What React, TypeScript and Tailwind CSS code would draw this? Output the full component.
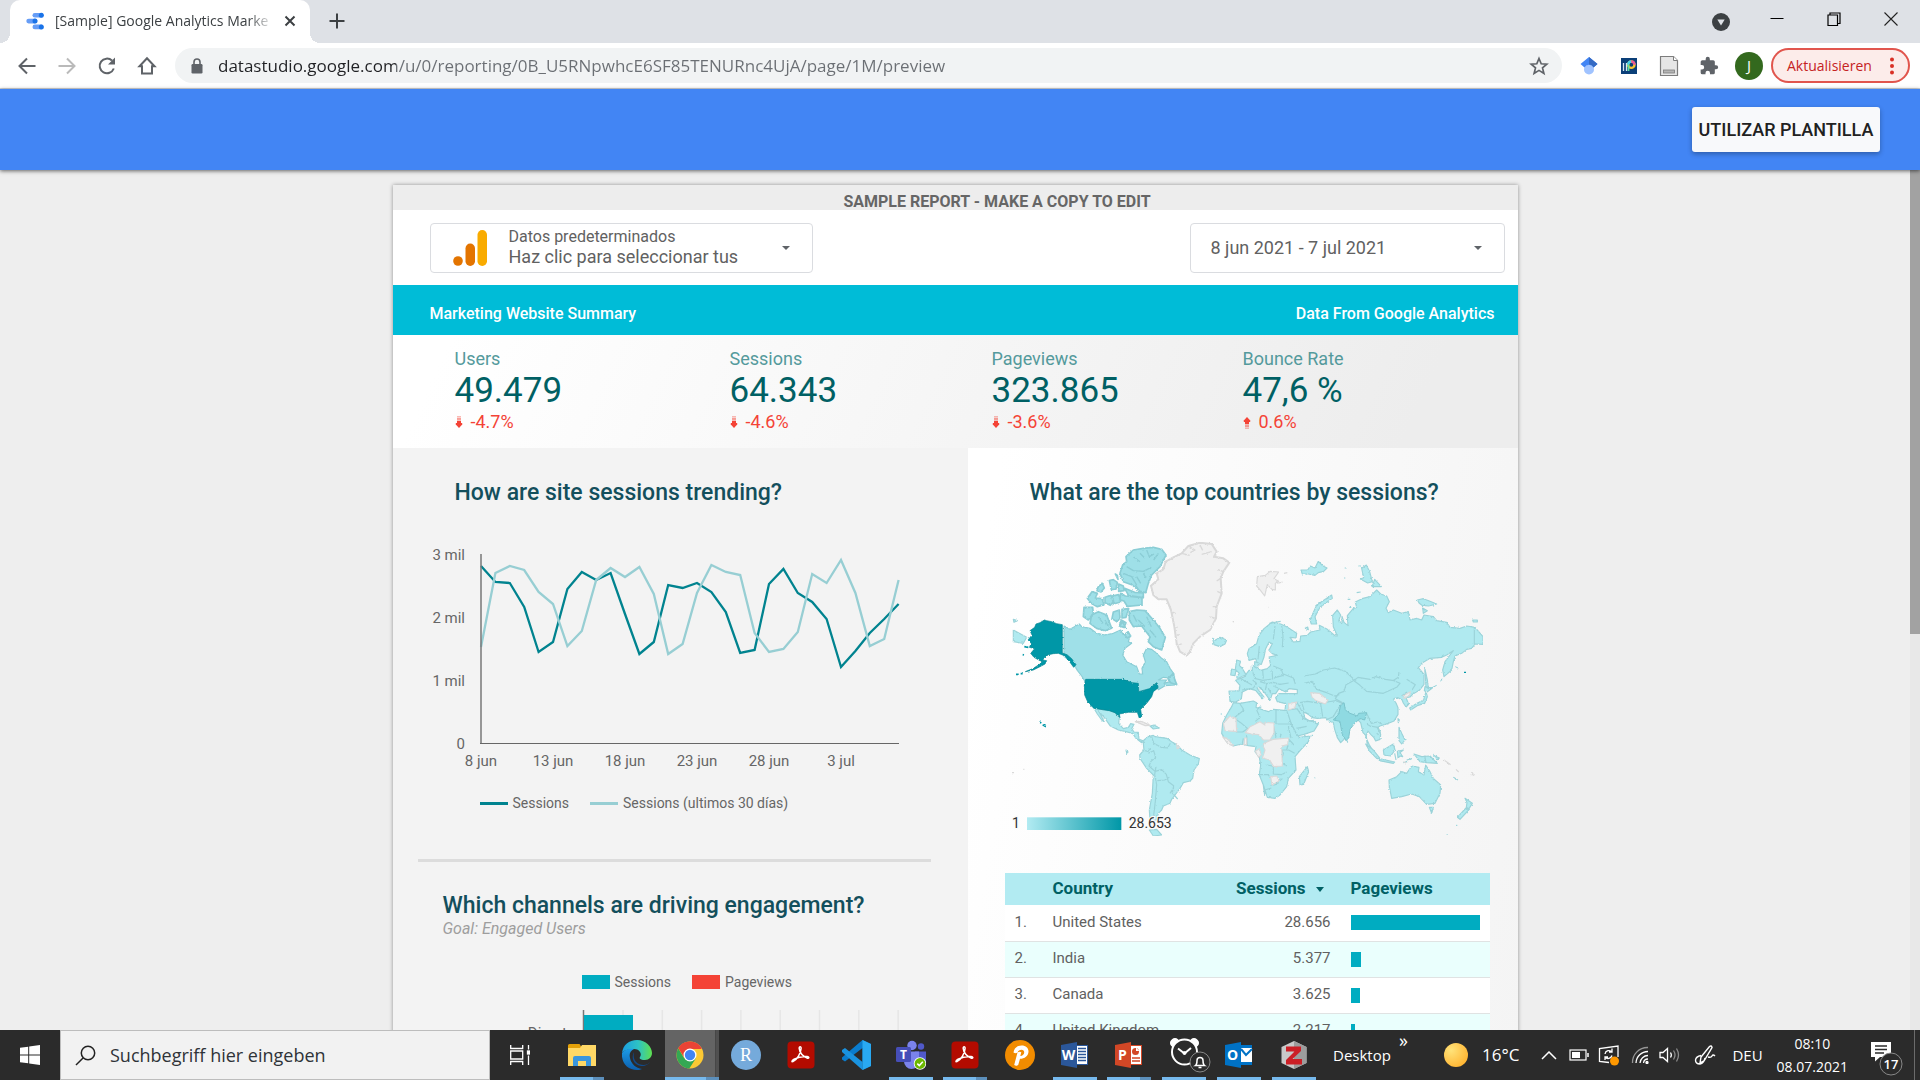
import React from "react";

/* ---------------------------------------------------------------- data */

const kpis = [
  { label: "Users", value: "49.479", delta: "-4.7%", up: false },
  { label: "Sessions", value: "64.343", delta: "-4.6%", up: false },
  { label: "Pageviews", value: "323.865", delta: "-3.6%", up: false },
  { label: "Bounce Rate", value: "47,6 %", delta: "0.6%", up: true },
];

const current = [12, 28, 29, 53, 98, 88, 35, 18, 26, 19, 60, 100, 88, 31, 34, 29, 38, 58, 99, 96, 30, 15, 39, 48, 65, 113, 97, 79, 65, 50];
const previous = [93, 19, 12, 16, 38, 50, 92, 77, 26, 14, 23, 13, 40, 100, 90, 39, 11, 18, 21, 79, 98, 95, 78, 20, 29, 6, 39, 92, 85, 26];
const toPoints = (ys: number[]) => ys.map((y, i) => `${88 + i * 14.4},${y + 10}`).join(" ");

const countries = [
  { name: "United States", sessions: "28.656", bar: 129 },
  { name: "India", sessions: "5.377", bar: 10 },
  { name: "Canada", sessions: "3.625", bar: 9 },
  { name: "United Kingdom", sessions: "2.217", bar: 4 },
];

/* ------------------------------------------------------------- browser */

function StudioLogo() {
  return (
    <svg viewBox="0 0 18 18" className="h-[18px] w-[18px] shrink-0">
      <rect x="6.500" y="1" width="11" height="4.600" rx="2.300" fill="#669df6" />
      <rect x="0.300" y="6.800" width="11" height="4.600" rx="2.300" fill="#669df6" />
      <rect x="6.500" y="12.600" width="11" height="4.600" rx="2.300" fill="#669df6" />
      <circle cx="15.300" cy="3.300" r="2.500" fill="#1a73e8" />
      <circle cx="9" cy="9.100" r="2.500" fill="#1a73e8" />
      <circle cx="15.300" cy="14.900" r="2.500" fill="#1a73e8" />
    </svg>
  );
}

function TabStrip() {
  return (
    <div className="flex h-[43px] items-center bg-[#dee1e6]">
      <div className="flex h-full items-end">
        <span className="h-[10px] w-[10px] bg-[radial-gradient(circle_at_0_0,#dee1e6_10px,#fff_10px)]" />
      </div>
      <div className="flex h-full w-[300px] items-center rounded-t-[10px] bg-white pb-[2px] pl-4 pr-3">
        <StudioLogo />
        <span className="ml-[11px] w-[219px] overflow-hidden whitespace-nowrap text-[14px] text-[#3c4043] [mask-image:linear-gradient(90deg,#000_88%,transparent)]">
          [Sample] Google Analytics Marke
        </span>
        <button aria-label="Close tab" className="ml-[10px]">
          <svg viewBox="0 0 12 12" className="h-3 w-3" stroke="#3c4043" strokeWidth="2">
            <path d="M1.500 1.500l9 9M10.500 1.500l-9 9" />
          </svg>
        </button>
      </div>
      <div className="flex h-full items-end">
        <span className="h-[10px] w-[10px] bg-[radial-gradient(circle_at_100%_0,#dee1e6_10px,#fff_10px)]" />
      </div>
      <button aria-label="New tab" className="ml-[9px] pb-[2px]">
        <svg viewBox="0 0 16 16" className="h-4 w-4" stroke="#3c4043" strokeWidth="2">
          <path d="M8 .5v15M.5 8h15" />
        </svg>
      </button>
      <div className="ml-auto flex h-full items-center pr-[22px]">
        <button aria-label="Search tabs" className="mr-[40px]">
          <svg viewBox="0 0 18 18" className="h-[18px] w-[18px]">
            <circle cx="9" cy="9" r="9" fill="#3c4043" />
            <path d="M5.300 6.500h7.400L9 12.500z" fill="#dee1e6" />
          </svg>
        </button>
        <div className="flex items-center gap-[43px] pb-[6px]">
          <button aria-label="Minimize">
            <svg viewBox="0 0 14 14" className="h-[14px] w-[14px]" stroke="#000" strokeWidth="1"><path d="M0.500 6.500h13" /></svg>
          </button>
          <button aria-label="Restore">
            <svg viewBox="0 0 14 14" className="h-[14px] w-[14px]" stroke="#000" strokeWidth="1.200" fill="none">
              <path d="M1 3h9.500v10.500H1zM3 3V1h10v10.500h-2.500" />
            </svg>
          </button>
          <button aria-label="Close">
            <svg viewBox="0 0 14 14" className="h-[14px] w-[14px]" stroke="#222" strokeWidth="1.100"><path d="M.5.5l13 13M13.500.5l-13 13" /></svg>
          </button>
        </div>
      </div>
    </div>
  );
}

function Toolbar() {
  return (
    <div className="flex h-[46px] items-center border-b border-[#d5d7da] bg-white pl-[17px] pr-[10px]">
      <div className="flex items-center gap-5 text-[#5f6368]">
        <button aria-label="Back">
          <svg viewBox="0 0 20 20" className="h-5 w-5" fill="none" stroke="currentColor" strokeWidth="2"><path d="M18.500 10H3M10 2.500L2.500 10l7.500 7.500" /></svg>
        </button>
        <button aria-label="Forward" className="text-[#bababa]">
          <svg viewBox="0 0 20 20" className="h-5 w-5" fill="none" stroke="currentColor" strokeWidth="2"><path d="M1.500 10H17M10 2.500l7.500 7.500-7.500 7.500" /></svg>
        </button>
        <button aria-label="Reload">
          <svg viewBox="0 0 20 20" className="h-5 w-5">
            <path d="M16.800 12.500A7.300 7.300 0 1 1 15 4.600" fill="none" stroke="currentColor" strokeWidth="2" />
            <path d="M18 1.500v7h-7z" fill="currentColor" />
          </svg>
        </button>
        <button aria-label="Home">
          <svg viewBox="0 0 20 20" className="h-5 w-5" fill="none" stroke="currentColor" strokeWidth="2"><path d="M10 2.300L2.500 10.200H5V17.500h10v-7.300h2.500z" /></svg>
        </button>
      </div>
      <div className="ml-[18px] flex h-[35px] flex-1 items-center rounded-full bg-[#f1f3f4] pl-4 pr-[13px]">
        <svg viewBox="0 0 12 16" className="h-4 w-3 shrink-0">
          <rect x="0.500" y="6" width="11" height="9.500" rx="1.200" fill="#5f6368" />
          <path d="M3 6.500V4a3 3 0 0 1 6 0v2.500" fill="none" stroke="#5f6368" strokeWidth="1.600" />
        </svg>
        <input
          aria-label="Address"
          defaultValue="datastudio.google.com/u/0/reporting/0B_U5RNpwhcE6SF85TENURnc4UjA/page/1M/preview"
          className="ml-[15px] min-w-0 flex-1 bg-[linear-gradient(90deg,#202124_178px,#6b6f74_178px)] bg-clip-text text-[17px] text-transparent outline-none"
        />
        <button aria-label="Bookmark">
          <svg viewBox="0 0 20 20" className="h-5 w-5" fill="none" stroke="#5f6368" strokeWidth="1.700">
            <path d="M10 2.500l2.200 5.300 5.600.4-4.300 3.700 1.400 5.500-4.900-3-4.900 3 1.400-5.500L2.200 8.200l5.600-.4z" />
          </svg>
        </button>
      </div>
      <div className="flex items-center gap-5 pl-[17px]">
        <svg viewBox="0 0 20 20" className="h-5 w-5">
          <circle cx="10" cy="13.500" r="5" fill="#a0c3ff" />
          <path d="M10 1L1.500 8l4 3.500a5 5 0 0 1 9 0l4-3.500z" fill="#4285f4" />
          <path d="M10 1l8.500 7-4 3.500A5 5 0 0 0 10 8.500z" fill="#356ac3" />
        </svg>
        <svg viewBox="0 0 20 20" className="h-5 w-5">
          <rect x="2" y="2" width="16" height="16" fill="#0b3f78" />
          <path d="M4.500 7v8M7.500 7v8" stroke="#d6e6f5" strokeWidth="1.300" />
          <circle cx="12.300" cy="8.700" r="3.200" fill="none" stroke="#f7c531" strokeWidth="2.400" />
          <path d="M9.100 8.700a3.200 3.200 0 0 1 3.200-3.200" fill="none" stroke="#3fd0f0" strokeWidth="2.400" />
          <path d="M12.300 5.500a3.200 3.200 0 0 1 3.200 3.200" fill="none" stroke="#e9559b" strokeWidth="2.400" />
          <path d="M9.500 9v6" stroke="#5be0a0" strokeWidth="1.800" />
        </svg>
        <svg viewBox="0 0 20 22" className="h-[22px] w-5">
          <path d="M1.500 1.500h13l4 4v15h-17z" fill="#e6e6e6" stroke="#7c7c7c" strokeWidth="1.200" />
          <path d="M14.500 1.500v4h4" fill="#fff" stroke="#7c7c7c" />
          <rect x="4.500" y="15" width="11" height="3" fill="#b5b5b5" stroke="#7c7c7c" strokeWidth="0.800" />
        </svg>
        <svg viewBox="0 0 24 24" className="h-5 w-5" fill="#5f6368">
          <path d="M20.500 11H19V7a2 2 0 0 0-2-2h-4V3.500a2.500 2.500 0 0 0-5 0V5H4a2 2 0 0 0-2 2v3.800h1.500a2.700 2.700 0 0 1 0 5.400H2V20a2 2 0 0 0 2 2h3.800v-1.500a2.700 2.700 0 0 1 5.400 0V22H17a2 2 0 0 0 2-2v-4h1.500a2.500 2.500 0 0 0 0-5z" />
        </svg>
      </div>
      <button className="ml-[16px] flex h-7 w-7 items-center justify-center rounded-full bg-[#33691e] text-[15px] text-white">J</button>
      <button className="ml-2 flex h-[35px] w-[139px] items-center justify-between rounded-full border-2 border-[#d93025]/80 bg-[#fcecea] pl-[14px] pr-[14px] text-[14px] text-[#c5221f]">
        Aktualisieren
        <svg viewBox="0 0 4 18" className="h-[18px] w-1" fill="#d93025">
          <circle cx="2" cy="2.500" r="2" /><circle cx="2" cy="9" r="2" /><circle cx="2" cy="15.500" r="2" />
        </svg>
      </button>
    </div>
  );
}

/* -------------------------------------------------------------- report */

const Caret = () => (
  <svg viewBox="0 0 8 4" className="h-1 w-2" fill="#5f6368"><path d="M0 0h8L4 4z" /></svg>
);

function DeltaArrow({ up }: { up: boolean }) {
  return (
    <svg viewBox="0 0 8 12" className={up ? "mt-px h-3 w-2" : "h-3 w-2 rotate-180"} fill="#f44336">
      <path d="M4 0L.8 3.500v1.500h6.400V3.500z" />
      <path d="M2 4h4v3H2z" />
      <path d="M2 7.600h4v1H2z" opacity=".8" />
      <path d="M2 9.200h4v1H2z" opacity=".65" />
      <path d="M2 10.800h4v1H2z" opacity=".45" />
    </svg>
  );
}

function TrendChart() {
  return (
    <svg viewBox="0 0 575 230" className="block w-full" fontFamily="Roboto, sans-serif" fontSize="15" fill="#666">
      {["3 mil", "2 mil", "1 mil", "0"].map((t, i) => (
        <text key={t} x="72" y={16 + i * 63} textAnchor="end">{t}</text>
      ))}
      {["8 jun", "13 jun", "18 jun", "23 jun", "28 jun", "3 jul"].map((t, i) => (
        <text key={t} x={88 + i * 72} y="222" textAnchor="middle">{t}</text>
      ))}
      <polyline points={toPoints(current)} fill="none" stroke="#00838f" strokeWidth="2.300" />
      <polyline points={toPoints(previous)} fill="none" stroke="#97ced3" strokeWidth="2.300" />
      <path d="M88 10v190" stroke="#777" strokeWidth="1.500" />
      <path d="M87 199.500h419" stroke="#666" strokeWidth="1.200" />
    </svg>
  );
}

function ChannelChart() {
  return (
    <svg viewBox="0 0 575 60" className="block w-full" fontFamily="Roboto, sans-serif" fontSize="15" fill="#666">
      {[0, 1, 2, 3, 4, 5, 6, 7].map((i) => (
        <path key={i} d={`M${230 + i * 39.3} 0v60`} stroke="#e6e6e6" strokeWidth="1.500" />
      ))}
      <path d="M190.500 0v60" stroke="#777" strokeWidth="1.500" />
      <rect x="191" y="5" width="49" height="37" fill="#00acc1" />
      <text x="174" y="28" textAnchor="end">Direct</text>
    </svg>
  );
}

const seaIslands =
  "M325 200l12-10 6 14-10 12-12-4zM292 235l14-20 16 5-6 14 20 2 6 18-20 6-18-10zM358 182l12-3 12 8-4 20-14 2zM386 192l14 6 2 14-16 2zM345 232l18-6 8 18-10 12-16-8zM366 228l20-4 6 22-22 6zM392 220l14 8 50 5 0 22-44 4-10-16-12-4zM370 276l18-6 2 22-8 14-16-10zM396 268l20-2-8 26-12 2zM376 162l6 4 2 12zM404 205l30 12 26 2v14l-44-6zM394 300l14 8-6 14-14-4zM404 344l10-8 8 12-10 6zM388 318l10-12 8 16z";

function WorldMap() {
  return (
    <svg viewBox="60 60 1431 900" className="block h-[300px] w-[477px]" strokeLinejoin="round" role="img" aria-label="Sessions by country">
      <defs>
        <filter id="coast" x="0" y="0" width="100%" height="100%">
          <feTurbulence type="fractalNoise" baseFrequency="0.18" numOctaves="2" seed="4" />
          <feDisplacementMap in="SourceGraphic" scale="7" xChannelSelector="R" yChannelSelector="G" />
        </filter>
        <linearGradient id="scale" x1="0" x2="1" y1="0" y2="0">
          <stop offset="0" stopColor="#b2ebf2" />
          <stop offset="1" stopColor="#0097a7" />
        </linearGradient>
      </defs>
      <g filter="url(#coast)">
        {/* Greenland */}
        <path
          d="M483 197l22-19-5-18 20-12 7-23 23-13 25-12 20-22 35-10 35 4 15 23-8 15 28 5 18 13-18 27-8 20 3 45-15 40-2 35-18 35-30 20-20 20-10 25-10 12-20-12-10-25-7-50-10-50-13-32-25 0-15-13z"
          fill="#f1f1f1" stroke="#d9d9d9" strokeWidth="6"
        />
        <path d="M595 78l20 12-14 8M575 100l24 6M630 75l8 16M665 95l-30 8M700 155l-16-6M692 175l-12 8M694 220l-12-6M680 260l-12 0M677 295l-16-4M545 275l12 6M553 320l10 2M560 345l10 0M566 375l10-4" fill="none" stroke="#d9d9d9" strokeWidth="4" />
        <g fill="#9fe0e8" stroke="#8bcdd5" strokeWidth="5">
          {/* Canada */}
          <path d="M222 318l18 10 28-16 7 8 25 5 20 15 25 5 25-5 22-10 8 15 15-10 5 15-5 15 10 5-20 15-7 20 12 20 30 15 8 22 10 0-2-17 10-20-6-20 10-20 15 3 15 12 15 15 15 10 10 20 12 17-12 12-20-2-15 8 25 0-8 10 18-5 20 5-5 5-30 2-20 12-5-13-10 5-15 10-25 12-10-12-5-15-15-5-25-7H285l-10-16-13-17-12-20-28-22z" strokeWidth="3.500" />
          <path d="M418 275l22-5 25 2 25 28 20 25 16 27-11 38-25-10-15-15 5-15-25-32-25 2-12-20zM305 285l20-10 25 10 15 40-20 7-25-7-20-15zM282 262l26 0 2 18-15 20-15-10z" />
          <path d="M460 85l30-3 25 6 13 17-18 35-25 25-10 25-8 28-20-5-20-18-27-10-10-25 8-25 12-10-2-15 22-20z" />
          <path d={seaIslands} />
          <path d="M410 140l20 12 30 2 24-12M400 160l25 10 15 25M430 110l20 15M470 90l8 20 14-8M440 170l12 20M450 215l-14-20M445 300l20 20M470 290l14 30M480 330l18 22M450 100l14 14M505 100l-14 20M460 160l8 14M430 285l10 20M325 290l14 20M345 300l10 20" fill="none" strokeWidth="4" />
          <path d="M534 476l16-16 4 18 6 16-18-6z" />
        </g>
        <g fill="#b0eaf0" stroke="#9bd3d9" strokeWidth="3.500">
          {/* Mexico, Central and South America, Iceland, Chukotka */}
          <path d="M312 565l46 7 17 6 13 16-2 16 14 16 15-4 7-11 10 2-7 13 7 10 13 1 2 21 15 5-7 5-17-13-10-15-23-6-20-4-25-13-15-22-20-23 10 18 8 16-8-6-13-18z" />
          <path d="M462 660l13-10 15-4 5 4 35 5 15 10 17 10 13 15 25 15 28 11-3 16-13 18-4 25-8 8-20 5-10 17-15 20-10 13-5 12-20 8-5 12-10 10-5 20h-20l-2-30 9-50 3-55-20-20-20-30-1-10 13-15-2-20zM478 930l22-2 15 17-25 3z" />
          <path d="M668 355l8 6 14-9 20 8-5 12-15 8-18-6zM70 330l40 22-10 18-30-5zM70 298l12 4-10 5zM408 690l6 6-4 4zM480 618l12-3 16 9-18 3z" />
          <path d="M485 650l6 20 22 12 20 2 8-14M475 700l16-8 6 20-14 12-6 14 18 16 20-5 14 14 6 22 16 12-4 22 16 18M498 740l-4 24 6 30-4 50-6 50M502 782l22-2 14-8M540 820l12-18M456 690l18 4 8-10" fill="none" />
        </g>
        {/* United States */}
        <path d="M163 300l-13 8-12 4-4 10-14 10 6 13-12 15 10 10-6 12 16 4-12 14 10 12 18 10 8 2-8 8-20 13-24 10 24-5 20-10 15-8 5-10-12-2 7-8 10-8 15-3 15-1 20 8 16 20 10 14 7-8-13-18-14-12-14-5v-85l-17-3-15-6-15-3zM287 478h110l30 10 18 2 1 25 32-9 22-18 5 15-15 12-5 15-15 20-18 18 3 22-7 5-6-18h-27l-27 5 2 11-15-15-17-6-46-7-17-15-11-25-1-30z" fill="#0097a7" stroke="#00838f" strokeWidth="2" />
        <path d="M78 463h8M92 461h6M103 380l12 2M148 606l6 3M158 614l10 6M98 404l4 1" stroke="#0097a7" strokeWidth="5" />
        <path d="M436 605l18-1 26 12-14 1zM560 672l8 10-6 6zM66 758h6M100 748h3M730 305h2" fill="#eee" stroke="#d9d9d9" strokeWidth="4" />
      </g>
      <g transform="translate(690 0)">
        <g filter="url(#coast)">
          <g fill="#b0eaf0" stroke="#9bd3d9" strokeWidth="3.500">
            {/* Eurasia */}
            <path d="M182 312l18 8 30 20-2 14-18-2 10 14 20-2 2-16 20-2 10-10 28-6-2-14 24 12 24 20 6 0-12-28-2-34 14-16 10 15-6 18 10 6 0-20 6 18 12 10-2-30 18-22 10-3-4-16 20-10 24-6 20-20 12 12 18 6 8 17-10 20 7 13 15-8 25 10 20-5 5 25 20-5 15 5 7-15 28 5 10 12 30 5 10 15 30 3 20-7 25 4 24 28v23l-24-1-10 13-15 3-15 12-20 8-5 17-5 25-23 20-4-20 7-25 15-20 10-13-20 13-15 7-35 3-25 15-10 13 17 20 0 30-14 18-18 10-10 10-12 2 8 20-8 8-8-12-4-10-12-6-14 4 8 12 6 14 0 20-12 20-20 8-22 7-8 5 10 20-2 15-13 5-5-10-10-10-8-10-7 18 10 22 15 25-5 0-15-20-3-30-10-10-7-30-10-10-12 10-8 10-15 20-5 20-10 10-10-15-8-25-4-20-13-5-10-10-25 2-15-2-15-12-12-6 4 18 13 10 15-2 12 12-12 20-30 10-20 5-10-20-20-40-7-15 2-22-25-6-5-12 10-12h55l0-12-25-3-10 10-20-10-10 15-10 0-7 20-8-12-10-13-15-15-5 5 20 25-5 5-20-25-20-5-20 10-3 20-17 10-17-2-3-31 30 0 3-17-13-15 25-10 15-20 10 0 0-15 13 5 12 10 20-5 10-10-5-25 25-5-15-5-10-10 10-20-10-5-10 20-5 25-8 22-12-2-5-15-20 5-5-20 5-15 23-15 7-25 15-20 25-20z" />
            {/* Africa */}
            <path d="M40 548l20 2 40-7 10 5-2 14 22 8 15 5 15-7 40 4 5 13 10 30 13 25 10 12 32-4-5 17-25 27-15 18 3 40-23 25-5 25-20 25-15 10-23-3-12-37-12-30 4-30-4-23-13-17 3-15-23-3-20-5-25 6-20-13-15-25 3-30 12-25 15-25z" />
            <path d="M262 740l4 15-15 38-11 2-2-25 12-15zM507 780l23-10 15-15 15 5 15-22 22 4-2 13 17 10 5-30 13 20 10 20 22 20-2 25-15 30-25 3-22-23-23-8-30 8-30 5-7-35zM628 862h12l-5 18zM735 835l22 15-10 16-8-4 2-14zM738 864l8 6-26 28-8-6z" />
            <path d="M437 672l23 18 20 25-10 0-20-20zM478 716l46 10-4 4-42-8zM490 690l30-18 5 18-13 18-20-3zM532 694l18-4-10 8 8 12-8-2-6 6zM582 702l23 8 25-2 22 22-32-2-20-3zM537 622l8 18 10 20-10 12-8-10zM534 596l4 4-3 8zM618 515l4 15-8 20-20 6-22 14-3-6 22-14 20-10zM615 500l22 4-16 12-8-4zM614 444l8 36 4 26-8-6z" />
            <path d="M50 420l12 4-4 12 8 8 12 20-26 12-2-6 8-10-12-12zM32 465l3-18 13 3-3 17zM270 300l20-45 45-30 2 10-37 27-15 28 5 22-16 0zM243 150l20 0 8-12 14 6 10-20 14 14 12 6-10 10-16 4-10 8-20-4-18 0zM425 145l14-10 10 20 8 30-14 4-22-12 10-4zM456 200l8-22 20 22zM592 240l18-4 20 8 20 8-24 6-20-2-8-6zM608 264l14 8-12 8zM758 300l14 0 0 6-12 0zM255 325l8-4 2 8zM104 425l12 4-4 16-8-4zM410 218l12-2M372 174h4M374 144h6M415 138h8M383 238h8M388 262h6M470 640l6 4M524 700l4 20M560 720l16-4M640 706l18 8-8 6M700 772l14 8M550 728l14-4M282 774h4M380 660l4 8M275 646h4" />
            <path d="M118 378l-4 40M165 318l-5 40M185 318l4 30-2 34M98 455l6 20 24 6 30-4-2-28M128 450l2 26M160 438l24 10 6 18-28 8M66 510l34-6 10-14-12-10M120 485l20 6 20-4 20 6 26-4M140 492l-4 18M160 498l14 6M190 462l30 12 6 18M145 505l8 16M60 475l36 20" fill="none" />
            <path d="M252 468l34-6 24-12 34-6 32 10 28 26 10-8 36 6 16-8 30 8 26 4 18 8-10 12-40 18-50-6-20-18-16-12M404 480l-26 14-6 20-16 6-10 16 18 10 10 8M252 490l24-6 14 24 30 10 24 10 14-4M240 548l22-4 40 6 20-4 26-4 18 8-12 16-14 24-18 8M246 550l6 20M302 552l6 38M230 545l14 26 22 12M205 570l26-4 20 30 46 16M230 625l30-6M537 456l-2 16-16 10M560 478l26 16-10 16M545 528l16-12M440 580l14 30 18-4 14 6M440 612l14 8M450 618l24 4 8 16" fill="none" />
            <path d="M110 570l10 22-14 12M60 552l12 18-30 24 20 14 26 22 26-24M168 570v42M124 560l-12 8M170 612h42M160 612l8 40M205 620l8 34M48 636l20 0 12-8M70 655l-4 20M80 648l2 28M182 690h24l18 10M140 735l24 4 22-6M180 680l10 20-8 26 18 12M118 764h26l8 10M150 795l14 0 24-20M130 796l4 30 0-16 20-6M160 740v22l24 2 16-8M184 640l-4 14M204 655l18 20M200 690l4-16" fill="none" />
            <path d="M148 310l34-6M614 706l4 22M763 322v50" fill="none" />
          </g>
          <g fill="#f0f0f0" stroke="#d9d9d9" strokeWidth="3.500">
            <path d="M10 610l20-22 18 7 2 40-35-3zM90 620l30-15 15 10 0-8 27 2 0 31-12 20-20 0-14-16-22-2-18-4zM132 670l28-12 45-4-2 20-18 4 2 60-26 2-12-20-22-6 8-24-6-12zM152 770l18-2 8 14-22 14zM8 650l16 8 16 20-16-6zM106 694l12-8 6 18-8 8zM74 654h6v20h-8z" />
            <path d="M272 518l26 2 26 20-8 12-28-10-12-10zM549 527l22-12-2 10-14 10zM206 550l24-4-6 18-18 6z" />
            <path d="M112 170l24-4 14-12 26 2-14 20 14 8-10 6 0 20-10-2-14-14-8 34-12-16-12-14zM192 160l10-2M172 190l16-4M145 262h1M38 305h4M672 720l20 14M708 748l8 8M752 764l12 0M757 757l4 10M550 725l8 4" />
          </g>
          <path d="M340 600l16-18 6-26 10-8 4 22 14 10 22 8 4-8 24-2-6 22-14-4-16 14-14 18-4 26-8 8-12-22-6-36z" fill="#8fdae2" stroke="#7cc4cc" strokeWidth="3" />
          <path d="M650 496l-20 10M662 484l4-8M706 440l8 4M708 916h4M680 944h3M2 582h4M664 414l6-10" stroke="#8fd0d8" strokeWidth="3" />
          <path d="M732 457h6" stroke="#0097a7" strokeWidth="4" />
        </g>
      </g>
      <g>
        <rect x="111" y="892" width="283" height="38" fill="url(#scale)" />
        <g fontFamily="Roboto, sans-serif" fontSize="42" fill="#333" stroke="#fafafa" strokeWidth="8" paintOrder="stroke">
          <text x="66" y="925">1</text>
          <text x="416" y="925">28.653</text>
        </g>
      </g>
    </svg>
  );
}

function CountryTable() {
  return (
    <table className="w-full table-fixed border-collapse text-[15px] text-[#616161]">
      <colgroup>
        <col className="w-[48px]" />
        <col />
        <col className="w-[114px]" />
        <col className="w-[159px]" />
      </colgroup>
      <thead>
        <tr className="h-8 bg-[#b2ebf2] text-left text-[17px] text-[#006064]">
          <th aria-label="Rank" />
          <th className="font-bold">Country</th>
          <th className="whitespace-nowrap font-bold">
            <span className="flex items-center justify-end pr-[7px]">
              Sessions
              <svg viewBox="0 0 8 5" className="ml-[10px] h-[5px] w-2" fill="#006064"><path d="M0 0h8L4 5z" /></svg>
            </span>
          </th>
          <th className="pl-[20px] font-bold">Pageviews</th>
        </tr>
      </thead>
      <tbody>
        {countries.map((c, i) => (
          <tr key={c.name} className="h-9 border-b border-[#e0e3e3] bg-white even:bg-[#eafffd]">
            <td className="pb-px pl-[10px]">{i + 1}.</td>
            <td className="pb-px">{c.name}</td>
            <td className="pb-px text-right">{c.sessions}</td>
            <td className="pl-[20px]">
              <div className="h-[15px] bg-[#00acc1]" style={{ width: c.bar }} />
            </td>
          </tr>
        ))}
      </tbody>
    </table>
  );
}

function Report() {
  return (
    <article className="mx-auto w-full max-w-[1125px] bg-white shadow-[0_0_4px_rgba(0,0,0,0.4)]">
      <p className="h-[25px] bg-[#ededed] pl-[84px] pt-[5px] text-center text-[16px] font-bold leading-6 text-[#666]">
        SAMPLE REPORT - MAKE A COPY TO EDIT
      </p>
      <div className="flex items-center justify-between pb-3 pl-[37px] pr-[13px] pt-[13px]">
        <button className="flex h-[50px] w-[383px] items-center rounded border border-[#dadce0] pl-[22px] pr-[22px] text-left text-[#616161]">
          <svg viewBox="0 0 35 36" className="h-9 w-[35px]">
            <circle cx="5" cy="31" r="4.800" fill="#e37400" />
            <rect x="12.500" y="13.500" width="9.500" height="22.500" rx="4.700" fill="#e37400" />
            <rect x="24.500" y="0" width="9.500" height="36" rx="4.700" fill="#f9ab00" />
          </svg>
          <span className="ml-[21px] flex-1 pb-[2px]">
            <span className="block text-[16px] leading-5">Datos predeterminados</span>
            <span className="block text-[18px] leading-5">Haz clic para seleccionar tus</span>
          </span>
          <Caret />
        </button>
        <button className="flex h-[50px] w-[315px] items-center justify-between rounded border border-[#dadce0] pl-[20px] pr-[22px] text-[18px] text-[#616161]">
          <span className="pb-[2px]">8 jun 2021 - 7 jul 2021</span>
          <Caret />
        </button>
      </div>
      <div className="flex h-[50px] items-center justify-between bg-[#00bcd7] pl-[37px] pr-[23px] pt-[7px] text-[16px] font-medium text-white">
        <span>Marketing Website Summary</span>
        <span>Data From Google Analytics</span>
      </div>
      <section className="grid h-[113px] grid-cols-[275fr_262fr_251fr_275fr] bg-[linear-gradient(115deg,#fff_5%,#ededed_90%)] pl-[62px] pt-[12px]">
        {kpis.map((k) => (
          <div key={k.label}>
            <div className="text-[18px] leading-6 text-[#549a9c]">{k.label}</div>
            <div className="text-[35px] leading-10 text-[#006064]">{k.value}</div>
            <div className="flex items-center gap-2 text-[18px] leading-[22px] text-[#f44336]">
              <DeltaArrow up={k.up} />
              {k.delta}
            </div>
          </div>
        ))}
      </section>
      <div className="grid grid-cols-[575fr_550fr]">
        <section className="bg-[#f3f3f3] pt-[31px]">
          <h2 className="pl-[62px] text-[23px] font-medium leading-7 text-[#134f5c]">How are site sessions trending?</h2>
          <div className="mt-[37px]"><TrendChart /></div>
          <div className="mt-[19px] flex items-center pl-[87px] text-[14px] leading-5 text-[#666]">
            <span className="h-[3px] w-7 bg-[#00838f]" />
            <span className="ml-[5px]">Sessions</span>
            <span className="ml-[21px] h-[3px] w-7 bg-[#97ced3]" />
            <span className="ml-[5px]">Sessions (ultimos 30 días)</span>
          </div>
          <div className="ml-[25px] mr-[37px] mt-[46px] h-[3px] bg-[#dcdcdc]" />
          <h2 className="mt-[30px] pl-[50px] text-[23px] font-medium leading-7 text-[#134f5c]">Which channels are driving engagement?</h2>
          <p className="pl-[50px] text-[16px] italic leading-[18px] text-[#9e9e9e]">Goal: Engaged Users</p>
          <div className="mt-[34px] flex items-center pl-[189px] text-[14px] leading-5 text-[#666]">
            <span className="h-[14px] w-7 bg-[#00acc1]" />
            <span className="ml-[5px]">Sessions</span>
            <span className="ml-[21px] h-[14px] w-7 bg-[#f44336]" />
            <span className="ml-[5px]">Pageviews</span>
          </div>
          <div className="mt-[18px]"><ChannelChart /></div>
        </section>
        <section className="bg-[linear-gradient(100deg,#fff_5%,#f4f4f4)] pl-[37px] pr-[28px] pt-[31px]">
          <h2 className="pl-[25px] text-[23px] font-medium leading-7 text-[#134f5c]">What are the top countries by sessions?</h2>
          <div className="ml-[5px] mt-[33px]"><WorldMap /></div>
          <div className="mt-[33px]"><CountryTable /></div>
        </section>
      </div>
    </article>
  );
}

/* ------------------------------------------------------------- taskbar */

const Acrobat = () => (
  <svg viewBox="0 0 28 28" className="h-7 w-7">
    <rect x="0.500" y="0.500" width="27" height="27" rx="4" fill="#b30b00" />
    <path d="M6 20.500c-1.500 1-1.500-1 1-2.300 3-1.500 8-3.200 13-2.700 3 .4 1.800 2.200 0 1.600-4-1.300-7.500-5.500-7.800-9.600-.1-2.300 2-2.300 1.900 0-.3 4.500-4 11.500-8.100 13z" fill="none" stroke="#fff" strokeWidth="1.500" />
  </svg>
);

function OfficeIcon({ letter, color, dark, children }: { letter: string; color: string; dark: string; children: React.ReactNode }) {
  return (
    <svg viewBox="0 0 28 28" className="h-7 w-7">
      <rect x="12" y="4" width="15" height="20" fill={color} />
      {children}
      <path d="M0 4L16 1v26L0 24z" fill={dark} />
      <text x="7.500" y="19" textAnchor="middle" fontSize="14" fontWeight="700" fill="#fff">{letter}</text>
    </svg>
  );
}

const apps: { name: string; bar?: "full" | "split"; active?: boolean; icon: React.ReactNode }[] = [
  {
    name: "Explorer", bar: "split",
    icon: (
      <svg viewBox="0 0 28 24" className="h-6 w-7">
        <path d="M0 2.500Q0 1 1.500 1h10l2 3H28v5H0z" fill="#e3a008" />
        <path d="M0 5h12l2-3h14v21H0z" fill="#ffd866" />
        <path d="M5 23v-8q0-2 2-2h14q2 0 2 2v8h-5v-5h-8v5z" fill="#3a96dd" />
      </svg>
    ),
  },
  {
    name: "Edge",
    icon: (
      <svg viewBox="0 0 30 30" className="h-[30px] w-[30px]">
        <defs>
          <linearGradient id="edge1" x1="0" x2="1" y1="0.400" y2="0.400"><stop offset="0" stopColor="#1b9de2" /><stop offset="0.550" stopColor="#2ec3c3" /><stop offset="1" stopColor="#5fe04f" /></linearGradient>
          <linearGradient id="edge2" x1="0" x2="0" y1="0" y2="1"><stop offset="0" stopColor="#1c9be6" /><stop offset="1" stopColor="#0c5fae" /></linearGradient>
        </defs>
        <path d="M0 13C1 5 7 0 15 0c9 0 15 7 15 13 0 4-3 7-7 7-5 0-6-2-5-3 2-3 0-8-6-8C7 9 2 10 0 13z" fill="url(#edge1)" />
        <path d="M0 13c2-3 7-5 12-4-4 2-5 5-4 9 1 6 6 10 12 11-2 1-4 1-5 1C6 30-1 23 0 13z" fill="url(#edge2)" />
        <path d="M12 12c-3 5-1 13 7 14 4 .5 8-2 9-4-4 6-19 3-16-10z" fill="#114a8b" />
      </svg>
    ),
  },
  {
    name: "Chrome", bar: "split", active: true,
    icon: (
      <svg viewBox="0 0 28 28" className="h-7 w-7">
        <circle cx="14" cy="14" r="13.500" fill="#fcc934" />
        <path d="M2.300 7.300A13.500 13.500 0 0 1 25.700 7.300L14 8z" fill="#ea4335" />
        <path d="M2.300 7.300a13.500 13.500 0 0 0 11 20.200l6.500-10-11.600-.2z" fill="#34a853" />
        <path d="M2.300 7.300L8.500 17 14 8h11.700A13.500 13.500 0 0 0 2.300 7.300z" fill="#ea4335" />
        <circle cx="14" cy="14" r="6.500" fill="#fff" />
        <circle cx="14" cy="14" r="5.200" fill="#4285f4" />
      </svg>
    ),
  },
  {
    name: "RStudio",
    icon: (
      <svg viewBox="0 0 30 30" className="h-[30px] w-[30px]">
        <circle cx="15" cy="15" r="15" fill="#75aadb" />
        <text x="15" y="21" textAnchor="middle" fontSize="18" fontFamily="Liberation Serif, serif" fill="#fff">R</text>
      </svg>
    ),
  },
  { name: "Acrobat Reader", icon: <Acrobat /> },
  {
    name: "VS Code",
    icon: (
      <svg viewBox="0 0 30 30" className="h-[30px] w-[30px]">
        <path d="M21.500 0L30 4v22l-8.500 4V8L4 21.500 1 19.500v-2z" fill="#0a7ccd" />
        <path d="M21.500 30L1 12v-2l3-2 17.500 14z" fill="#1a93e0" />
        <path d="M21.500 0L30 4v22l-8.500 4z" fill="#29a9f2" />
      </svg>
    ),
  },
  {
    name: "Teams", bar: "full",
    icon: (
      <svg viewBox="0 0 30 30" className="h-[30px] w-[30px]">
        <circle cx="16" cy="5.500" r="4.700" fill="#7b83eb" />
        <circle cx="25" cy="6.500" r="3.200" fill="#5059c9" />
        <path d="M19 11.500h11v8a6 6 0 0 1-11 3z" fill="#5059c9" />
        <path d="M8 11.500h15v10a7.500 7.500 0 0 1-15 0z" fill="#7b83eb" />
        <rect x="0" y="7" width="15" height="15" rx="1.500" fill="#464eb8" />
        <text x="7.500" y="18.500" textAnchor="middle" fontSize="12" fontWeight="700" fill="#fff">T</text>
        <circle cx="24" cy="23.500" r="6.200" fill="#fff" />
        <circle cx="24" cy="23.500" r="5.400" fill="#6bb700" />
        <path d="M21.300 23.600l2 2 3.500-3.800" stroke="#fff" strokeWidth="1.500" fill="none" />
      </svg>
    ),
  },
  { name: "Acrobat", bar: "split", icon: <Acrobat /> },
  {
    name: "Pushbullet",
    icon: (
      <svg viewBox="0 0 30 30" className="h-[30px] w-[30px]">
        <circle cx="15" cy="15" r="15" fill="#f28c00" />
        <path d="M8.500 12.500C9 8 12.500 5.500 16.500 5.500c4.500 0 7 2.600 7 6 0 4.500-4 7.300-8.500 7.300l-1.800 6.200q-2 1.500-4 0l3.300-12.500q2-1.500 3.800-.3l-1 3.800c2.400 0 3.900-1.800 3.900-3.700 0-1.500-1-2.600-2.700-2.600-2 0-3.200 1-4 2.800q-2 1.300-4 0z" fill="#fff" />
      </svg>
    ),
  },
  {
    name: "Word", bar: "full",
    icon: (
      <OfficeIcon letter="W" color="#fff" dark="#2b579a">
        <path d="M17 7.500h8M17 10.500h8M17 13.500h8M17 16.500h8M17 19.500h8" stroke="#2b579a" strokeWidth="1.300" />
        <rect x="12.500" y="4.500" width="14" height="19" fill="none" stroke="#2b579a" />
      </OfficeIcon>
    ),
  },
  {
    name: "PowerPoint", bar: "split",
    icon: (
      <OfficeIcon letter="P" color="#fff" dark="#d24726">
        <circle cx="20.500" cy="10.500" r="3.500" fill="#d24726" />
        <path d="M21 10V6.500l3.500 3.500z" fill="#fff" />
        <path d="M17 17h8M17 20h8" stroke="#d24726" strokeWidth="1.300" />
        <rect x="12.500" y="4.500" width="14" height="19" fill="none" stroke="#d24726" />
      </OfficeIcon>
    ),
  },
  {
    name: "Alarms", bar: "full",
    icon: (
      <svg viewBox="-14 0 56 36" className="h-9 w-[56px] shrink-0" fill="none" stroke="#fff">
        <circle cx="5" cy="6" r="4.500" fill="#fff" /><circle cx="24" cy="6" r="4.500" fill="#fff" />
        <circle cx="14.500" cy="15" r="12.500" fill="#2b2b2b" strokeWidth="2" />
        <path d="M8 11.500l6.500 5L21 11" strokeWidth="2" /><circle cx="14.500" cy="16" r="1.500" fill="#fff" />
        <circle cx="30" cy="25" r="10" fill="#2b2b2b" stroke="#888" />
        <path d="M25.500 28.500q1.500-1 1.500-5a3 3 0 0 1 6 0q0 4 1.500 5zM28.500 30.500h3" strokeWidth="1.500" />
      </svg>
    ),
  },
  {
    name: "Outlook", bar: "full",
    icon: (
      <OfficeIcon letter="O" color="#0072c6" dark="#0072c6">
        <rect x="15" y="7" width="12" height="14" fill="#fff" />
        <path d="M16 8l5 6 6-6" stroke="#0072c6" strokeWidth="2" fill="none" />
      </OfficeIcon>
    ),
  },
  {
    name: "Zotero", bar: "full",
    icon: (
      <svg viewBox="0 0 26 28" className="h-7 w-[26px]">
        <path d="M13 0l12.500 6v16L13 28 .5 22V6z" fill="#c9c9c9" />
        <path d="M13 0l12.500 6v16L13 28z" fill="#9d9d9d" />
        <path d="M5 5.500h15v4.500l-8.500 8H21v5.500H5v-4.500l8.500-8.500H5z" fill="#cc1f26" />
      </svg>
    ),
  },
];

function Taskbar() {
  return (
    <footer className="flex h-[50px] shrink-0 items-center bg-[#2b2b2b] text-white">
      <button aria-label="Start" className="flex h-full w-[60px] items-center justify-center">
        <svg viewBox="0 0 20 20" className="h-5 w-5" fill="#fff"><path d="M0 2.800L8.200 1.700v7.800H0zM9.200 1.500L20 0v9.500H9.200zM0 10.500h8.200v7.800L0 17.200zM9.200 10.500H20V20L9.200 18.500z" /></svg>
      </button>
      <label className="flex h-full w-[430px] items-center border border-[#bdbdbd] bg-[#f2f2f2] pl-[14px]">
        <svg viewBox="0 0 21 21" className="h-[21px] w-[21px]" fill="none" stroke="#222" strokeWidth="1.500"><circle cx="13" cy="8" r="6.700" /><path d="M8.300 12.700L1 20" /></svg>
        <input aria-label="Search" placeholder="Suchbegriff hier eingeben" className="ml-[14px] flex-1 bg-transparent text-[18px] outline-none placeholder:text-[#2f3338]" />
      </label>
      <button aria-label="Task view" className="ml-[20px]">
        <svg viewBox="0 0 20 20" className="h-5 w-5" fill="none" stroke="#fff" strokeWidth="1.300"><path d="M.7 0v3.500h12V0M.7 6h12v8h-12zM.7 20v-3.500h12V20M18.500 0v4.500M18.500 10.500V20" /><rect x="17.500" y="6" width="2" height="3" fill="#fff" /></svg>
      </button>
      <div className="ml-[25px] grid h-full w-[766px] grid-cols-14">
        {apps.map((a) => (
          <button key={a.name} aria-label={a.name} className="flex h-full items-center justify-center">
            <span className={a.active ? "flex h-full w-[54px] flex-col items-center bg-[linear-gradient(90deg,#646464_50px,#3e3e3e_50px,#505050_51px)]" : "flex h-full w-[44px] flex-col items-center"}>
              <span className={a.active ? "flex min-h-0 flex-1 items-center pr-1 pt-[3px]" : "flex min-h-0 flex-1 items-center pt-[3px]"}>{a.icon}</span>
              <span className={a.bar === "full" ? "h-[3px] w-full bg-[#76b9ed]" : a.bar === "split" ? "h-[3px] w-full bg-[linear-gradient(90deg,#76b9ed_75%,#5c8fbb_75%)]" : "h-[3px] w-full"} />
            </span>
          </button>
        ))}
      </div>
      <span className="ml-[12px] text-[15px]">Desktop</span>
      <span className="ml-[8px] self-start text-[18px] leading-5">»</span>
      <div className="ml-auto flex items-center">
        <span className="h-6 w-6 rounded-full bg-[radial-gradient(circle_at_30%_30%,#ffe37a,#ffa81e)]" />
        <span className="ml-[14px] text-[17px]">16°C</span>
        <svg viewBox="0 0 16 9" className="ml-[22px] h-[9px] w-4" fill="none" stroke="#fff" strokeWidth="1.500"><path d="M1 8l7-7 7 7" /></svg>
        <svg viewBox="0 0 20 12" className="ml-[12px] h-3 w-5" fill="none" stroke="#fff" strokeWidth="1.200"><rect x="1" y="1" width="16" height="10" /><rect x="3" y="3" width="8" height="6" fill="#fff" stroke="none" /><path d="M19 4v4" strokeWidth="1.500" /></svg>
        <svg viewBox="0 0 22 22" className="ml-[9px] h-[22px] w-[22px]" fill="none" stroke="#fff" strokeWidth="1.300"><path d="M11 18.500L1.500 17.500V4.500L20 2v11" /><path d="M7 10a4 4 0 0 1 7-2M14 4.500V8h-3M14 11.500a4 4 0 0 1-7 1.500M7 16v-3h3" /><circle cx="16.500" cy="17" r="4.500" fill="#ff9800" stroke="none" /></svg>
        <svg viewBox="0 0 18 18" className="ml-[11px] h-[18px] w-[18px]" fill="none" stroke="#fff" strokeWidth="1.300"><path d="M1.500 17A15 15 0 0 1 17 1.500" opacity=".5" /><path d="M5 17A12 12 0 0 1 17 5.500M9 17a8 8 0 0 1 8-7.500M12.500 17a4.500 4.500 0 0 1 4.500-4" /><circle cx="16" cy="16.500" r="1" fill="#fff" /></svg>
        <svg viewBox="0 0 22 16" className="ml-[10px] h-4 w-[22px]" fill="none" stroke="#fff" strokeWidth="1.300"><path d="M1 5.500h3L8.500 1.500v13L4 10.500H1z" /><path d="M11.500 5.500q1.700 2.500 0 5" /><path d="M14.500 3.500q3 4.500 0 9M17.500 1.500q4 6.500 0 13" opacity=".45" /></svg>
        <svg viewBox="0 0 22 22" className="ml-[13px] h-[22px] w-[22px]" fill="none" stroke="#fff" strokeWidth="1.400"><path d="M7 13L15.500 2.500q2-1.500 2.500 1L10 17l-4 2zM7 11.500q-5 1-5.500 4.500 0 4 4.500 4 4-1 5-6M14 13q3 1 4-1t3 0" /></svg>
        <span className="ml-[16px] text-[15px]">DEU</span>
        <span className="ml-[14px] text-center text-[14px] leading-[23px]">08:10<br />08.07.2021</span>
        <button aria-label="Notifications" className="ml-[23px] mr-[11px] pt-[6px]">
          <svg viewBox="0 0 32 36" className="h-9 w-8"><path d="M0 2h20v15H9l-5 4.500V17H0z" fill="#fff" /><path d="M4 6h12M4 9.500h12M4 13h9" stroke="#2b2b2b" strokeWidth="1.300" /><circle cx="20" cy="24" r="11" fill="#2b2b2b" stroke="#888" /><text x="20" y="29" textAnchor="middle" fontSize="13" fontWeight="600" fill="#fff">17</text></svg>
        </button>
        <span className="mr-[5px] h-[50px] w-px bg-[#6b6b6b]" />
      </div>
    </footer>
  );
}

export default function App() {
  return (
    <div className="flex h-screen flex-col overflow-hidden bg-[#eee] font-['Open_Sans',sans-serif]">
      <TabStrip />
      <Toolbar />
      <header className="z-10 flex h-[81px] shrink-0 items-center justify-end bg-[#4285f4] pr-[40px] font-[Roboto,sans-serif] shadow-[0_1px_4px_rgba(0,0,0,0.6)]">
        <button className="h-[45px] w-[188px] whitespace-nowrap rounded-[3px] bg-[#f8f9fb] text-[18px] font-medium text-[#212121] shadow-[0_2px_5px_rgba(0,0,0,0.3)]">
          UTILIZAR PLANTILLA
        </button>
      </header>
      <div className="flex min-h-0 flex-1">
        <main className="min-w-0 flex-1 overflow-hidden pt-[15px] font-[Roboto,sans-serif]">
          <Report />
        </main>
        <div className="w-[10px] bg-[#e8e8e8]">
          <div className="h-[54%] bg-[#a2a2a2]" />
        </div>
      </div>
      <Taskbar />
    </div>
  );
}
